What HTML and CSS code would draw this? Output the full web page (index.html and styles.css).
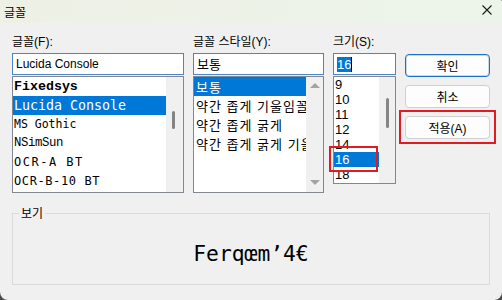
FILE: index.html
```html
<!DOCTYPE html>
<html lang="ko">
<head>
    <meta charset="UTF-8">
    <meta name="viewport" content="width=device-width, initial-scale=1.0">
    <title>글꼴</title>
    <link rel="stylesheet" href="styles.css">
</head>
<body>
    <div class="window">
        <div class="titlebar">
            <span class="title">글꼴</span>
            <svg class="close" width="10" height="10" viewBox="0 0 10 10">
                <path d="M0.5 0.5 L9.5 9.5 M9.5 0.5 L0.5 9.5" stroke="#1a1a1a" stroke-width="1.1" fill="none"/>
            </svg>
        </div>

        <div class="content">
            <div class="pickers">
                <div class="col col-font">
                    <label>글꼴(F):</label>
                    <div class="field">Lucida Console</div>
                    <div class="list list-font">
                        <ul class="items">
                            <li class="f-fixedsys">Fixedsys</li>
                            <li class="f-lucida sel">Lucida Console</li>
                            <li class="f-gothic">MS Gothic</li>
                            <li class="f-simsun">NSimSun</li>
                            <li class="f-ocra">OCR-A BT</li>
                            <li class="f-ocrb">OCR-B-10 BT</li>
                        </ul>
                        <div class="scroll"><span class="thumb"></span></div>
                    </div>
                </div>

                <div class="col col-style">
                    <label>글꼴 스타일(Y):</label>
                    <div class="field field-ko">보통</div>
                    <div class="list list-style">
                        <ul class="items">
                            <li class="sel">보통</li>
                            <li>약간 좁게 기울임꼴</li>
                            <li>약간 좁게 굵게</li>
                            <li>약간 좁게 굵게 기울임꼴</li>
                        </ul>
                        <div class="scroll scroll-arrows">
                            <span class="arrow up"></span>
                            <span class="arrow down"></span>
                        </div>
                    </div>
                </div>

                <div class="col col-size">
                    <label>크기(S):</label>
                    <div class="field field-size"><span class="selected">16</span><span class="caret"></span></div>
                    <div class="list list-size">
                        <ul class="items">
                            <li>9</li>
                            <li>10</li>
                            <li>11</li>
                            <li>12</li>
                            <li>14</li>
                            <li class="sel">16</li>
                            <li>18</li>
                        </ul>
                        <div class="scroll"><span class="thumb"></span></div>
                    </div>
                    <span class="mark mark-size"></span>
                </div>

                <div class="buttons">
                    <button class="btn btn-default">확인</button>
                    <button class="btn">취소</button>
                    <div class="btn-wrap">
                        <button class="btn">적용(A)</button>
                        <span class="mark mark-apply"></span>
                    </div>
                </div>
            </div>

            <fieldset class="preview">
                <legend>보기</legend>
                <div class="sample">Ferqœm’4€</div>
            </fieldset>
        </div>
    </div>
</body>
</html>
```

FILE: styles.css
```css
html, body {
    margin: 0;
    height: 100%;
}

body {
    background-color: #4a4a4a;
    font-family: "Liberation Sans", "Noto Sans CJK KR", sans-serif;
    font-size: 12px;
    color: #000;
}

.window {
    width: 502px;
    height: 300px;
    background-color: #f0f0f0;
    border-radius: 0 2px 8px 8px;
    overflow: hidden;
    display: flex;
    flex-direction: column;
}

.titlebar {
    height: 23px;
    flex: none;
    display: flex;
    align-items: center;
    justify-content: space-between;
    padding: 0 10px 0 4px;
    background: linear-gradient(90deg, #eef0e5, #ecf4ea);
}

.title {
    font-family: "Noto Sans CJK KR", sans-serif;
    font-size: 12px;
    line-height: 16px;
    margin-top: 1px;
}

.close {
    align-self: flex-start;
    margin-top: 5px;
}

.content {
    padding: 11px 12px 0;
}

.pickers {
    display: flex;
    align-items: flex-start;
    gap: 9px;
}

.col {
    display: flex;
    flex-direction: column;
}

.col-font { width: 172px; }
.col-style { width: 131px; }
.col-size { width: 63px; position: relative; }

label {
    display: block;
    height: 16px;
    line-height: 16px;
    margin-bottom: 3px;
    white-space: nowrap;
}

.field {
    height: 22px;
    box-sizing: border-box;
    border: 1px solid #4a86c8;
    background-color: #fff;
    padding: 0 3px;
    line-height: 20px;
    white-space: nowrap;
    overflow: hidden;
}

.field-ko {
    font-family: "Noto Sans CJK KR", sans-serif;
    font-size: 13px;
}

.field-size {
    display: flex;
    align-items: center;
    font-size: 13px;
}

.field-size .selected {
    background-color: #0078d7;
    color: #fff;
    line-height: 15px;
}

.field-size .caret {
    width: 1px;
    height: 15px;
    background-color: #000;
}

.list {
    margin-top: 1px;
    border: 1px solid #828790;
    background-color: #fff;
    display: flex;
    overflow: hidden;
    box-sizing: border-box;
    height: 117px;
}

.list-size { height: 108px; }

.items {
    flex: 1;
    min-width: 0;
    list-style: none;
    margin: 0;
    padding: 0;
    overflow: hidden;
}

.items li {
    height: 19px;
    line-height: 19px;
    padding-left: 1px;
    white-space: nowrap;
    overflow: hidden;
}

.items li.sel {
    background-color: #0078d7;
    color: #fff;
}

.list-font li { font-size: 13.3px; }
.f-fixedsys { font-family: "Liberation Mono", monospace; font-weight: bold; }
.f-lucida { font-family: "DejaVu Sans Mono", monospace; }
.f-gothic { font-family: "DejaVu Sans Mono", monospace; font-size: 11.5px !important; }
.f-simsun { font-family: "Liberation Mono", monospace; font-size: 12.3px !important; letter-spacing: -0.4px; }
.f-ocra { font-family: "DejaVu Sans Mono", monospace; font-size: 12px !important; letter-spacing: 1.5px; }
.f-ocrb { font-family: "DejaVu Sans Mono", monospace; font-size: 12px !important; letter-spacing: 0.6px; }

.list-style li {
    font-family: "Noto Sans CJK KR", sans-serif;
    font-size: 13px;
    padding-left: 2px;
    letter-spacing: 1px;
}

.list-size li {
    height: 15px;
    line-height: 15px;
    font-size: 13px;
}

.scroll {
    width: 17px;
    flex: none;
    background-color: #f0f0f0;
    display: flex;
    flex-direction: column;
}

.list-font .thumb {
    width: 3px;
    height: 18px;
    margin: 34px 0 0 6px;
    background-color: #858585;
    border-radius: 2px;
}

.list-size .scroll { width: 16px; }

.list-size .thumb {
    width: 3px;
    height: 30px;
    margin: 21px 0 0 7px;
    background-color: #858585;
    border-radius: 2px;
}

.scroll-arrows {
    justify-content: space-between;
    align-items: center;
    padding: 6px 0 7px;
    box-sizing: border-box;
}

.arrow {
    width: 0;
    height: 0;
    border-left: 5px solid transparent;
    border-right: 5px solid transparent;
}

.arrow.up { border-bottom: 5px solid #a3a3a3; }
.arrow.down { border-top: 5px solid #a3a3a3; }

.buttons {
    width: 85px;
    margin-top: 20px;
    display: flex;
    flex-direction: column;
    gap: 8px;
}

.btn {
    width: 85px;
    height: 23px;
    box-sizing: border-box;
    border: 1px solid #d0d0d0;
    border-radius: 4px;
    background-color: #fdfdfd;
    font-family: "Liberation Sans", "Noto Sans CJK KR", sans-serif;
    font-size: 12px;
    color: #000;
    padding: 0;
}

.btn-default {
    border-color: #1f6fc5;
    box-shadow: inset 0 0 0 1px rgba(31, 111, 197, 0.25);
}

.btn-wrap {
    position: relative;
    display: flex;
}

.mark {
    position: absolute;
    border: 2px solid #e21b23;
    box-sizing: border-box;
}

.mark-size {
    left: -4px;
    top: 112px;
    width: 49px;
    height: 26px;
}

.mark-apply {
    left: -6px;
    top: -6px;
    right: -6px;
    bottom: -5px;
}

.preview {
    margin: 13px 0 0;
    padding: 0;
    min-width: 0;
    height: 79px;
    box-sizing: border-box;
    border: 1px solid #dadada;
}

.preview legend {
    font-family: "Noto Sans CJK KR", sans-serif;
    font-size: 12px;
    line-height: 14px;
    margin-left: 6px;
    padding: 0 2px;
}

.sample {
    height: 62px;
    display: flex;
    align-items: center;
    justify-content: center;
    padding-top: 4px;
    box-sizing: border-box;
    font-family: "DejaVu Sans Mono", monospace;
    font-size: 21.3px;
}
```
